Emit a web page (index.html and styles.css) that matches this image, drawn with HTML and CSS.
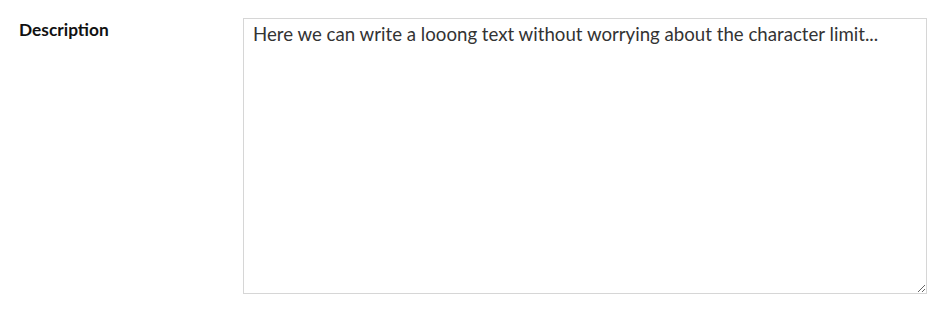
FILE: index.html
```html
<!DOCTYPE html>
<html lang="en">
<head>
<meta charset="utf-8">
<title>Description</title>
<link rel="stylesheet" href="styles.css">
</head>
<body>
<div class="form-row">
  <label class="field-label" for="desc">Description</label>
  <textarea id="desc" class="field-input">Here we can write a looong text without worrying about the character limit...</textarea>
</div>
</body>
</html>
```
FILE: styles.css
```css
html, body {
  margin: 0;
  padding: 0;
  background: #ffffff;
}
body {
  font-family: Lato, "Open Sans", sans-serif;
}
.form-row {
  display: grid;
  grid-template-columns: 224px 684px;
  padding: 18px 0 0 19px;
}
.field-label {
  font-family: Lato, sans-serif;
  font-weight: 700;
  font-size: 17.33px;
  line-height: normal;
  color: #111111;
  padding-top: 1px;
}
.field-input {
  box-sizing: border-box;
  width: 684px;
  height: 276px;
  margin: 0;
  border: 1px solid #d6d6d6;
  border-radius: 0;
  padding: 4px 9px;
  font-family: Lato, sans-serif;
  font-size: 18.67px;
  line-height: normal;
  color: #333333;
  background: #ffffff;
  outline: none;
  resize: vertical;
}
```
